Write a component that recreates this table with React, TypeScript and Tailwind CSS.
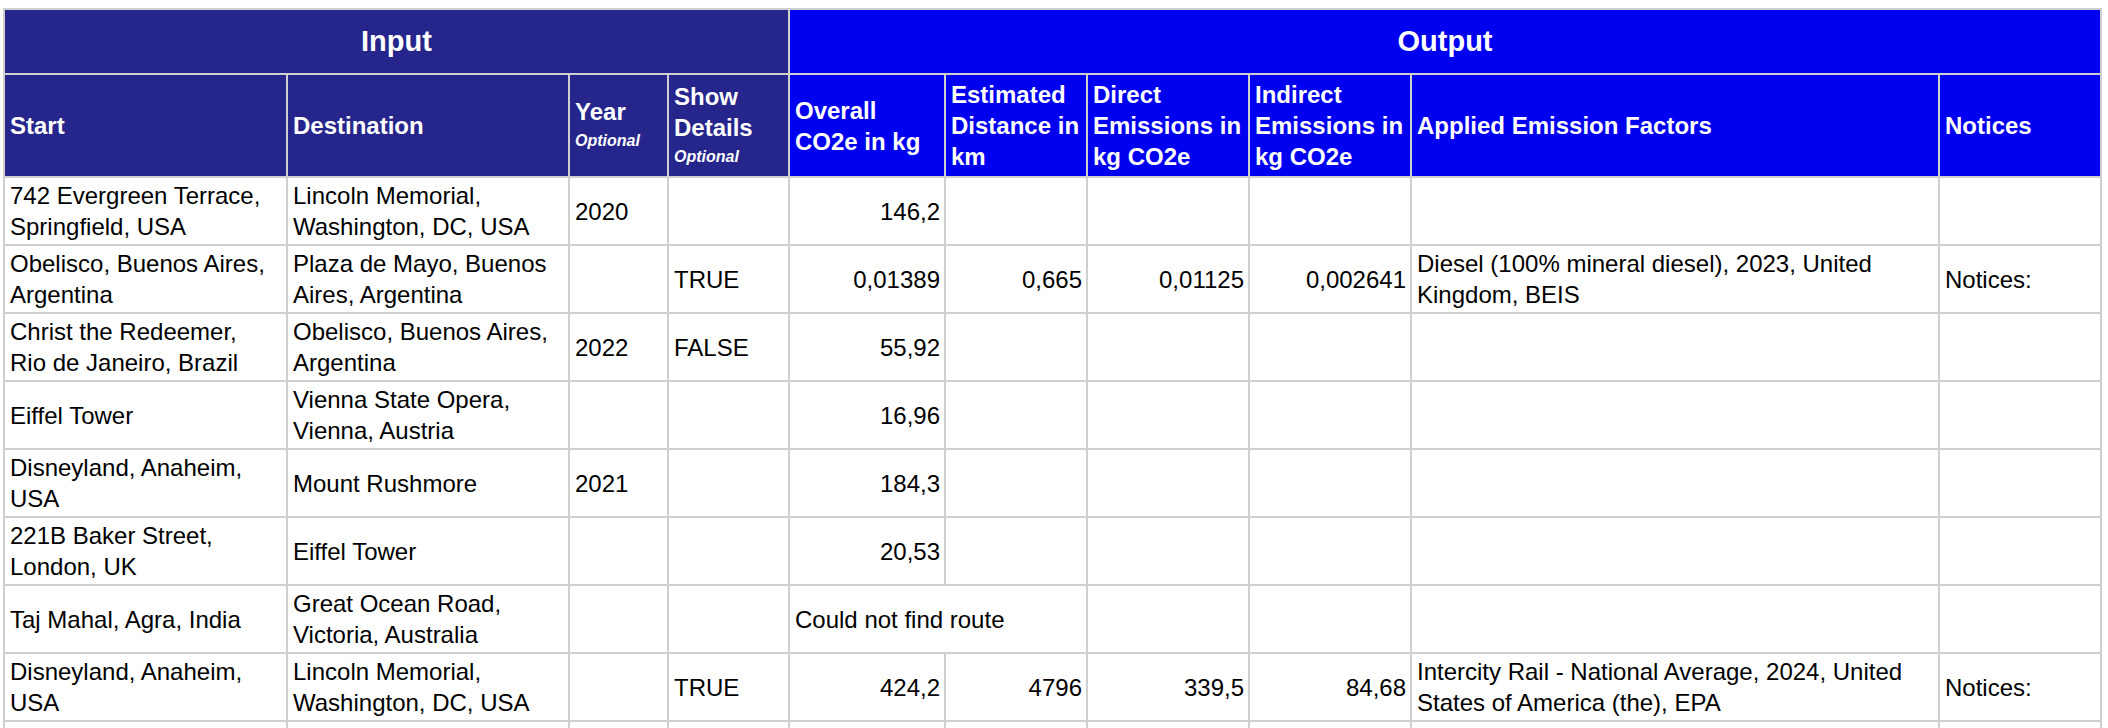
import { type FC } from "react";

type Row = {
  start: string;
  destination: string;
  year?: string;
  details?: string;
  overall?: string;
  distance?: string;
  direct?: string;
  indirect?: string;
  factors?: string;
  notices?: string;
  error?: string;
};

const rows: Row[] = [
  {
    start: "742 Evergreen Terrace, Springfield, USA",
    destination: "Lincoln Memorial, Washington, DC, USA",
    year: "2020",
    overall: "146,2",
  },
  {
    start: "Obelisco, Buenos Aires, Argentina",
    destination: "Plaza de Mayo, Buenos Aires, Argentina",
    details: "TRUE",
    overall: "0,01389",
    distance: "0,665",
    direct: "0,01125",
    indirect: "0,002641",
    factors: "Diesel (100% mineral diesel), 2023, United Kingdom, BEIS",
    notices: "Notices:",
  },
  {
    start: "Christ the Redeemer, Rio de Janeiro, Brazil",
    destination: "Obelisco, Buenos Aires, Argentina",
    year: "2022",
    details: "FALSE",
    overall: "55,92",
  },
  {
    start: "Eiffel Tower",
    destination: "Vienna State Opera, Vienna, Austria",
    overall: "16,96",
  },
  {
    start: "Disneyland, Anaheim, USA",
    destination: "Mount Rushmore",
    year: "2021",
    overall: "184,3",
  },
  {
    start: "221B Baker Street, London, UK",
    destination: "Eiffel Tower",
    overall: "20,53",
  },
  {
    start: "Taj Mahal, Agra, India",
    destination: "Great Ocean Road, Victoria, Australia",
    error: "Could not find route",
  },
  {
    start: "Disneyland, Anaheim, USA",
    destination: "Lincoln Memorial, Washington, DC, USA",
    details: "TRUE",
    overall: "424,2",
    distance: "4796",
    direct: "339,5",
    indirect: "84,68",
    factors: "Intercity Rail - National Average, 2024, United States of America (the), EPA",
    notices: "Notices:",
  },
  { start: "", destination: "" },
];

const line = "border-r-2 border-b-2 border-[#cfcfcf]";
const textCell = `${line} flex items-center h-[68px] pl-[5px] pr-[8px] leading-[31px]`;
const numCell = `${line} flex items-center justify-end h-[68px] pl-[4px] pr-[4px] leading-[31px]`;

const HeaderCell: FC<{ label: string; hint?: string; dark?: boolean }> = ({ label, hint, dark }) => (
  <div
    className={`${line} flex flex-col justify-center h-[103px] pl-[5px] pr-[3px] text-white font-bold leading-[31px] ${
      dark ? "bg-[#25258b]" : "bg-[#0000f0]"
    }`}
  >
    <span>{label}</span>
    {hint && <span className="text-[16px] leading-[28px] italic">{hint}</span>}
  </div>
);

export default function App() {
  return (
    <div className="h-[728px] overflow-hidden bg-white pt-[8px] pl-[3px] font-['Liberation_Sans',Arial,sans-serif] text-[24px] text-black">
      <div className="grid w-fit grid-cols-[283px_282px_99px_121px_156px_142px_162px_162px_528px_162px] border-l-2 border-t-2 border-[#cfcfcf]">
        <div className={`${line} col-span-4 flex h-[65px] items-center justify-center bg-[#25258b] text-[29px] font-bold text-white`}>
          Input
        </div>
        <div className={`${line} col-span-6 flex h-[65px] items-center justify-center bg-[#0000f0] text-[29px] font-bold text-white`}>
          Output
        </div>

        <HeaderCell label="Start" dark />
        <HeaderCell label="Destination" dark />
        <HeaderCell label="Year" hint="Optional" dark />
        <HeaderCell label="Show Details" hint="Optional" dark />
        <HeaderCell label="Overall CO2e in kg" />
        <HeaderCell label="Estimated Distance in km" />
        <HeaderCell label="Direct Emissions in kg CO2e" />
        <HeaderCell label="Indirect Emissions in kg CO2e" />
        <HeaderCell label="Applied Emission Factors" />
        <HeaderCell label="Notices" />

        {rows.map((row, i) => (
          <div key={i} className="contents">
            <div className={textCell}>{row.start}</div>
            <div className={textCell}>{row.destination}</div>
            <div className={textCell}>{row.year}</div>
            <div className={textCell}>{row.details}</div>
            {row.error ? (
              <div className={`${textCell} col-span-2 whitespace-nowrap`}>{row.error}</div>
            ) : (
              <>
                <div className={numCell}>{row.overall}</div>
                <div className={numCell}>{row.distance}</div>
              </>
            )}
            <div className={numCell}>{row.direct}</div>
            <div className={numCell}>{row.indirect}</div>
            <div className={textCell}>{row.factors}</div>
            <div className={textCell}>{row.notices}</div>
          </div>
        ))}
      </div>
    </div>
  );
}
